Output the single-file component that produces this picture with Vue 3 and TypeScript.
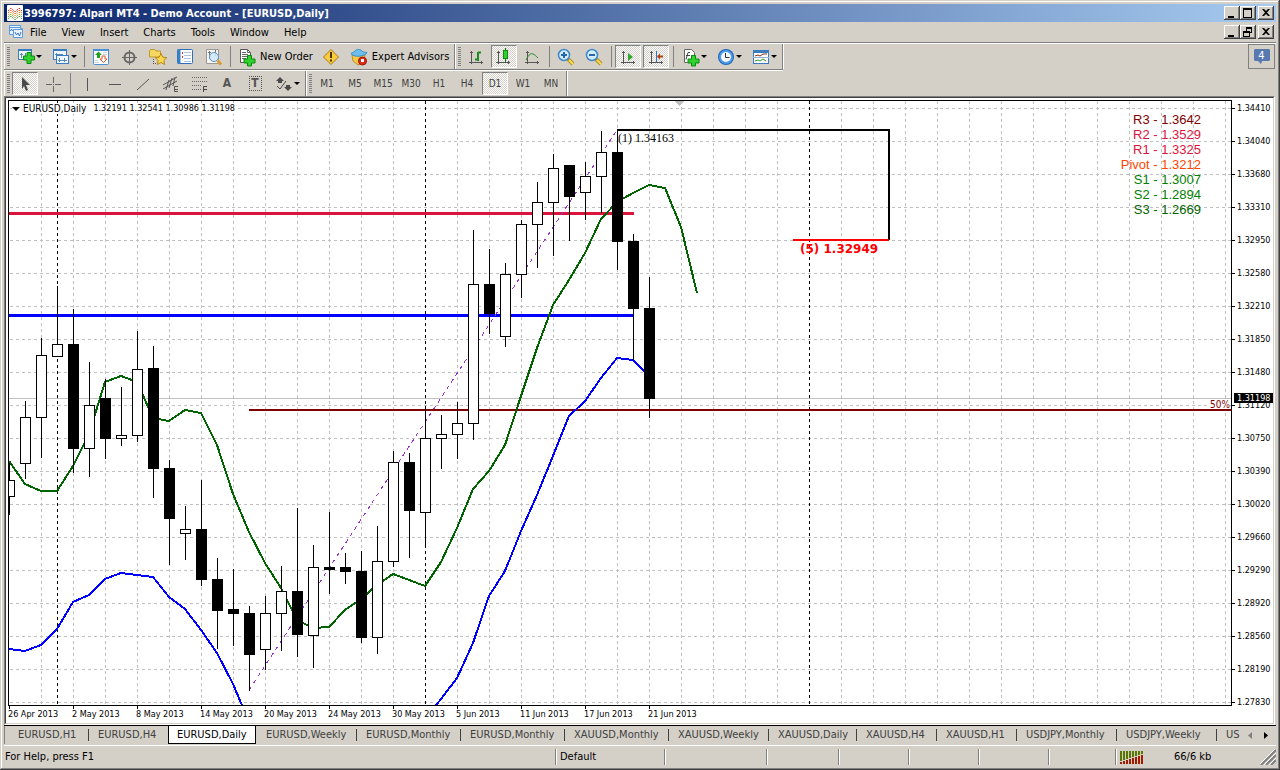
<script setup lang="ts">
import { ref } from 'vue'

interface Candle {
  x: number
  high: number
  top: number
  bottom: number
  low: number
  bear: boolean
}

const menus = ['File', 'View', 'Insert', 'Charts', 'Tools', 'Window', 'Help']
const periods = ['M1', 'M5', 'M15', 'M30', 'H1', 'H4', 'D1', 'W1', 'MN']
const period = ref('D1')

const tabs = [
  { label: 'EURUSD,H1', size: 's' },
  { label: 'EURUSD,H4', size: 's' },
  { label: 'EURUSD,Daily', size: 'm' },
  { label: 'EURUSD,Weekly', size: 'l' },
  { label: 'EURUSD,Monthly', size: 'xl' },
  { label: 'EURUSD,Monthly', size: 'xl' },
  { label: 'XAUUSD,Monthly', size: 'xl' },
  { label: 'XAUUSD,Weekly', size: 'l' },
  { label: 'XAUUSD,Daily', size: 'm' },
  { label: 'XAUUSD,H4', size: 's' },
  { label: 'XAUUSD,H1', size: 's' },
  { label: 'USDJPY,Monthly', size: 'l' },
  { label: 'USDJPY,Weekly', size: 'l' },
  { label: 'US', size: 'last' },
]
const activeTab = ref(2)

const prices = [
  '1.34410', '1.34040', '1.33680', '1.33310', '1.32950', '1.32580', '1.32210',
  '1.31850', '1.31480', '1.31120', '1.30750', '1.30390', '1.30020', '1.29660',
  '1.29290', '1.28920', '1.28560', '1.28190', '1.27830',
]
const dates = [
  '26 Apr 2013', '2 May 2013', '8 May 2013', '14 May 2013', '20 May 2013', '24 May 2013',
  '30 May 2013', '5 Jun 2013', '11 Jun 2013', '17 Jun 2013', '21 Jun 2013',
]
const pivots = [
  { text: 'R3 - 1.3642', tone: 'maroon' },
  { text: 'R2 - 1.3529', tone: 'crimson' },
  { text: 'R1 - 1.3325', tone: 'crimson' },
  { text: 'Pivot - 1.3212', tone: 'orange' },
  { text: 'S1 - 1.3007', tone: 'green' },
  { text: 'S2 - 1.2894', tone: 'green' },
  { text: 'S3 - 1.2669', tone: 'forest' },
]

const gridRows = Array.from({ length: 40 }, (_, i) => 7 + i * 33)
const gridCols = Array.from({ length: 80 }, (_, i) => 32 + i * 32)
const monthBreaks = [48, 416, 800]

// high, open/close top, open/close bottom, low, 1 for a falling bar
const bars: number[][] = [
  [463, 480, 496, 515, 0], [401, 417, 463, 479, 0], [338, 355, 417, 458, 0], [286, 344, 356, 356, 0],
  [309, 344, 448, 473, 1], [362, 405, 448, 477, 0], [379, 398, 438, 459, 1], [387, 435, 438, 446, 0],
  [331, 369, 435, 442, 0], [346, 368, 468, 498, 1], [460, 468, 518, 565, 1], [506, 529, 533, 560, 0],
  [480, 529, 579, 586, 1], [558, 579, 610, 649, 1], [569, 609, 613, 646, 1], [606, 613, 654, 691, 1],
  [596, 613, 649, 670, 0], [566, 591, 613, 651, 0], [508, 591, 634, 657, 1], [545, 567, 635, 668, 0],
  [512, 567, 569, 594, 1], [553, 567, 571, 584, 1], [551, 571, 637, 643, 1], [526, 561, 637, 654, 0],
  [451, 462, 561, 567, 0], [453, 462, 510, 558, 1], [406, 438, 512, 546, 0], [415, 434, 438, 469, 0],
  [402, 423, 434, 459, 0], [230, 284, 423, 440, 0], [249, 284, 313, 334, 1], [263, 274, 336, 347, 0],
  [220, 224, 274, 298, 0], [182, 202, 224, 268, 0], [154, 168, 202, 256, 0], [165, 165, 196, 241, 1],
  [162, 176, 192, 220, 0], [131, 152, 176, 213, 0], [130, 152, 241, 270, 1], [234, 241, 308, 360, 1],
  [277, 308, 398, 418, 1],
]
const candles: Candle[] = bars.map((b, i) => ({
  x: i * 16,
  high: b[0] - 101,
  top: b[1] - 101,
  bottom: b[2] - 101,
  low: b[3] - 101,
  bear: b[4] === 1,
}))

const line = (start: number, ys: number[]) =>
  ys.map((y, i) => `${(start + i) * 16},${y - 101}`).join(' ')

const greenLine = line(0, [
  461, 484, 491, 491, 466, 434, 382, 376, 382, 418, 421, 410, 413, 445, 494, 532, 563, 588, 620,
  628, 627, 610, 599, 585, 574, 580, 586, 562, 528, 489, 471, 445, 396, 348, 305, 280, 253, 219,
  202, 193, 185, 188, 227, 293,
])
const blueLeft = line(0, [
  649, 651, 645, 629, 602, 595, 579, 573, 575, 577, 597, 609, 630, 653, 684, 722,
])
const blueRight = line(26, [
  719, 699, 678, 643, 596, 571, 531, 495, 456, 416, 401, 378, 358, 360, 376,
])
</script>

<template>
  <div class="window">
    <header class="title-bar">
      <svg class="app-icon" width="16" height="16" viewBox="0 0 16 16" aria-hidden="true">
        <rect width="16" height="16" rx="1" fill="#fff" />
        <g fill="none" stroke-width="1" stroke-dasharray="2 1">
          <path d="M1 6l3-3 4 4 4-4 3 3" stroke="#d8322a" />
          <path d="M1 8l3-3 4 4 4-4 3 3" stroke="#e8682a" />
          <path d="M1 10l3-3 4 4 4-4 3 3" stroke="#e8a02a" />
          <path d="M1 12l3-3 4 4 4-4 3 3" stroke="#8cb83c" />
          <path d="M1 14l3-3 4 4 4-4 3 3" stroke="#4ca050" />
        </g>
      </svg>
      <h1>3996797: Alpari MT4 - Demo Account - [EURUSD,Daily]</h1>
      <div class="controls">
        <button type="button" aria-label="Minimize"><svg width="12" height="10"><rect x="2" y="8" width="6" height="2" /></svg></button>
        <button type="button" aria-label="Maximize"><svg width="12" height="10"><path d="M1 0h9v10h-9zM2 2v7h7v-7z" fill-rule="evenodd" /></svg></button>
        <button type="button" class="close" aria-label="Close"><svg width="12" height="10"><path d="M2 1h2l2 2 2-2h2L7 4.500l3 3.500H8L6 6 4 8H2l3-3.500z" /></svg></button>
      </div>
    </header>

    <nav class="menu-bar">
      <svg class="doc-icon" width="16" height="16" viewBox="0 0 16 16" aria-hidden="true">
        <path d="M1.500 1.500h11v3h2v9h-9v-3h-4z" fill="#eaf3fd" stroke="#5b9be0" />
        <path d="M5.500 10v-4.500h9M1 3.500h11" fill="none" stroke="#5b9be0" />
        <path d="M2.500 7l1-2 1 2M7 8l1.500 3 1.500-2 1.500 3 1.500-4" fill="none" stroke="#3b78c4" />
      </svg>
      <button v-for="m in menus" :key="m" type="button" class="menu-item">{{ m }}</button>
      <div class="controls">
        <button type="button" aria-label="Minimize chart"><svg width="12" height="10"><rect x="2" y="8" width="6" height="2" /></svg></button>
        <button type="button" aria-label="Restore chart"><svg width="12" height="10"><path d="M4 0h6v6H8v4H1V4h3zM5 2v2h3v1h1V2zM2 6v3h5V6z" fill-rule="evenodd" /></svg></button>
        <button type="button" class="close" aria-label="Close chart"><svg width="12" height="10"><path d="M2 1h2l2 2 2-2h2L7 4.500l3 3.500H8L6 6 4 8H2l3-3.500z" /></svg></button>
      </div>
    </nav>

    <div class="tool-area">
      <div class="toolbars">
        <div class="toolbar upper">
          <div class="group">
            <i class="grip"></i>
            <button type="button" class="tool drop" aria-label="New chart">
              <svg width="20" height="20" viewBox="0 0 20 20">
                <rect x="2.500" y="2.500" width="13" height="10" fill="#eef5fd" stroke="#3a7cc0" />
                <path d="M2 3h14" stroke="#3a7cc0" stroke-width="2" />
                <path d="M5.500 6v5M4 7.500h3M9.500 6v3M12.500 5v4" stroke="#5a88b8" fill="none" />
                <path d="M11 5.500h4V9h3.500v4H15v3.500h-4V13H7.500V9H11z" fill="#2fd02f" stroke="#0a8a0a" />
              </svg>
              <i class="arrow"></i>
            </button>
            <button type="button" class="tool drop" aria-label="Profiles">
              <svg width="20" height="20" viewBox="0 0 20 20">
                <rect x="2.500" y="2.500" width="13" height="10" fill="#eef5fd" stroke="#3a7cc0" />
                <path d="M2 3h14" stroke="#3a7cc0" stroke-width="2" />
                <path d="M4 7.500h8M5.500 6v3" stroke="#5a88b8" />
                <rect x="5.500" y="8.500" width="12" height="8" fill="#eef5fd" stroke="#3a7cc0" />
                <path d="M7 13.500h9M8.500 11v4M13.500 11v4" stroke="#5a88b8" />
              </svg>
              <i class="arrow"></i>
            </button>
            <i class="sep"></i>
            <button type="button" class="tool" aria-label="Market Watch">
              <svg width="20" height="20" viewBox="0 0 20 20">
                <rect x="2.500" y="2.500" width="15" height="15" rx="1" fill="#fff" stroke="#4a90d8" />
                <path d="M2 3h16" stroke="#4a90d8" stroke-width="2" />
                <path d="M7.500 4.500l3.500 3.500H9v3H6V8H4z" fill="#1fa01f" />
                <path d="M12.500 15.500L9 12h2V9h3v3h2z" fill="#fff" stroke="#e0592a" />
                <path d="M12 5.500h4M12 7.500h4M4 13.500h3M4 15.500h4" stroke="#c8d4e0" />
              </svg>
            </button>
            <button type="button" class="tool" aria-label="Data points">
              <svg width="20" height="20" viewBox="0 0 20 20" fill="none" stroke="#666">
                <circle cx="10.500" cy="10.500" r="5" stroke-width="2" />
                <path d="M10.500 3v15M3 10.500h15" />
              </svg>
            </button>
            <button type="button" class="tool" aria-label="Navigator">
              <svg width="20" height="20" viewBox="0 0 20 20">
                <path d="M2.500 4l1-1.500h4L9 4h4.500v6h-11z" fill="#f6d860" stroke="#c09828" />
                <path d="M6.500 12v6M8 16.500h3" stroke="#555" stroke-dasharray="1 1" />
                <path d="M14 6.500l1.800 3.700 4 .5-3 2.700.9 4.100-3.700-2-3.700 2 .9-4.100-3-2.700 4-.5z" fill="#fbd94c" stroke="#b88718" />
              </svg>
            </button>
            <button type="button" class="tool" aria-label="Terminal">
              <svg width="20" height="20" viewBox="0 0 20 20">
                <rect x="2.500" y="2.500" width="15" height="14" rx="1" fill="#fff" stroke="#2f6fb8" />
                <path d="M4 2.500v14" stroke="#3e80c8" stroke-width="3" />
                <path d="M7.500 5v2M7.500 9v2" stroke="#e03030" />
                <path d="M9 5.500h7M9 8.500h7M9 11.500h7M9 14.500h7" stroke="#a8c4e8" />
              </svg>
            </button>
            <button type="button" class="tool" aria-label="Strategy Tester">
              <svg width="20" height="20" viewBox="0 0 20 20">
                <path d="M3.500 2.500h12v14h-12z" fill="#f6f4ee" stroke="#999" />
                <path d="M5 5.500h3M6.500 4v8M12.500 3v6" stroke="#777" />
                <circle cx="11" cy="10" r="4.500" fill="#cfe6fa" fill-opacity=".85" stroke="#5a96d0" />
                <path d="M14.500 13.500l3.500 4" stroke="#d89c30" stroke-width="3" />
              </svg>
            </button>
            <i class="sep"></i>
            <button type="button" class="tool wide">
              <svg width="20" height="20" viewBox="0 0 20 20">
                <path d="M3.500 2.500h7l3 3v10h-10z" fill="#fff" stroke="#555" />
                <path d="M10.500 2.500v3h3M5 5.500h4M5 7.500h6M5 9.500h6M5 11.500h4" stroke="#666" fill="none" />
                <path d="M10.500 8.500h4V12H18v4h-3.500v3h-4v-3H7v-4h3.500z" fill="#2fd02f" stroke="#0a8a0a" />
              </svg>
              <span>New Order</span>
            </button>
            <button type="button" class="tool" aria-label="MetaEditor">
              <svg width="20" height="20" viewBox="0 0 20 20">
                <path d="M10 2.500l7.500 7.500-7.500 7.500L2.500 10z" fill="#f8cc3c" stroke="#a87818" stroke-linejoin="round" />
                <path d="M9 5h2v6H9zM9 12.500h2v2H9z" fill="#4a3408" />
              </svg>
            </button>
            <button type="button" class="tool wide">
              <svg width="20" height="20" viewBox="0 0 20 20">
                <path d="M3 8h13l-2 8-5 2-5-4z" fill="#f5c848" stroke="#c08c20" />
                <path d="M2 6.500c2-1.500 3-1 4-2.500 1-2 6-2 7 0 1 1.500 3 1 5 1.500-1 4-14 5.500-16 1z" fill="#6cc0f0" stroke="#3a8cc8" />
                <circle cx="13.500" cy="14" r="4" fill="#dc2c1c" stroke="#a01408" />
                <rect x="12" y="12" width="3" height="3" fill="#fff" />
              </svg>
              <span>Expert Advisors</span>
            </button>
          </div>
          <div class="group">
            <i class="grip"></i>
            <button type="button" class="tool" aria-label="Bar chart">
              <svg width="20" height="20" viewBox="0 0 20 20" fill="none" stroke="#555">
                <path d="M5.500 4v13M3 15.500h14M4 5.500h3M15.500 14v3" />
                <path d="M12 5v9M9 12.500h3M12 5.500h3" stroke="#1c8c1c" stroke-width="2" />
              </svg>
            </button>
            <button type="button" class="tool on" aria-label="Candlesticks">
              <svg width="20" height="20" viewBox="0 0 20 20" fill="none" stroke="#555">
                <path d="M4.500 4v13M2 15.500h14M3 5.500h3M14.500 14v3" />
                <path d="M11.500 1v14" stroke="#0c7c0c" />
                <rect x="9.500" y="3.500" width="4" height="8" fill="#2fd02f" stroke="#0c8c0c" />
              </svg>
            </button>
            <button type="button" class="tool" aria-label="Line chart">
              <svg width="20" height="20" viewBox="0 0 20 20" fill="none" stroke="#555">
                <path d="M5.500 4v13M3 15.500h14M4 5.500h3M15.500 14v3" />
                <path d="M4 13c3-6 5-7 7-6s3 2 5 4" stroke="#1c8c1c" />
              </svg>
            </button>
            <i class="sep"></i>
            <button type="button" class="tool" aria-label="Zoom in">
              <svg width="20" height="20" viewBox="0 0 20 20">
                <path d="M12 12l5 5" stroke="#b89020" stroke-width="4" />
                <path d="M13 13l4 4" stroke="#f6dc58" stroke-width="2" />
                <circle cx="8" cy="8" r="5.500" fill="#d4ecfc" stroke="#3c88cc" stroke-width="1.500" />
                <path d="M5 8h6M8 5v6" stroke="#2468a8" stroke-width="2" />
              </svg>
            </button>
            <button type="button" class="tool" aria-label="Zoom out">
              <svg width="20" height="20" viewBox="0 0 20 20">
                <path d="M12 12l5 5" stroke="#b89020" stroke-width="4" />
                <path d="M13 13l4 4" stroke="#f6dc58" stroke-width="2" />
                <circle cx="8" cy="8" r="5.500" fill="#d4ecfc" stroke="#3c88cc" stroke-width="1.500" />
                <path d="M5 8h6" stroke="#2468a8" stroke-width="2" />
              </svg>
            </button>
            <i class="sep"></i>
            <button type="button" class="tool on" aria-label="Auto scroll">
              <svg width="20" height="20" viewBox="0 0 20 20" fill="none" stroke="#555">
                <path d="M5.500 4v13M3 15.500h14M4 5.500h3M15.500 14v3" />
                <path d="M10 6l5 4-5 4z" fill="#2ca82c" stroke="none" />
              </svg>
            </button>
            <button type="button" class="tool on" aria-label="Chart shift">
              <svg width="20" height="20" viewBox="0 0 20 20" fill="none" stroke="#555">
                <path d="M5.500 4v13M3 15.500h14M4 5.500h3M15.500 14v3" />
                <path d="M10.500 4v11" stroke="#2c78c8" />
                <path d="M11 9.500l3-3v2h3v2h-3v2z" fill="#b83c10" stroke="none" />
              </svg>
            </button>
            <i class="sep"></i>
            <button type="button" class="tool drop" aria-label="Indicators">
              <svg width="20" height="20" viewBox="0 0 20 20">
                <path d="M3.500 2.500h7l3 3v10h-10z" fill="#fff" stroke="#666" />
                <path d="M5 12.500l2-7h2M5 8.500h4" stroke="#444" fill="none" />
                <path d="M10.500 8.500h4V12H18v4h-3.500v3h-4v-3H7v-4h3.500z" fill="#2fd02f" stroke="#0a8a0a" />
              </svg>
              <i class="arrow"></i>
            </button>
            <button type="button" class="tool drop" aria-label="Periods">
              <svg width="20" height="20" viewBox="0 0 20 20">
                <circle cx="10" cy="10" r="8" fill="#1c64b8" />
                <circle cx="10" cy="10" r="7" fill="#4c9ce8" />
                <circle cx="10" cy="10" r="5" fill="#f4f8fc" />
                <path d="M9.500 6v4.500h4" fill="none" stroke="#333" />
              </svg>
              <i class="arrow"></i>
            </button>
            <button type="button" class="tool drop" aria-label="Templates">
              <svg width="20" height="20" viewBox="0 0 20 20">
                <rect x="2.500" y="3.500" width="15" height="13" fill="#fff" stroke="#3a7cc0" />
                <path d="M2 4.500h16" stroke="#3a7cc0" stroke-width="3" />
                <path d="M2 10.500h16" stroke="#8cb4e0" />
                <path d="M4 9l3-1 2 1 3-2 4 0" stroke="#8c2c18" fill="none" />
                <path d="M4 14l3-1 2 1 3-2 3 2" stroke="#2c9c2c" fill="none" />
              </svg>
              <i class="arrow"></i>
            </button>
          </div>
        </div>

        <div class="toolbar">
          <div class="group">
            <i class="grip"></i>
            <button type="button" class="tool on" aria-label="Cursor">
              <svg width="20" height="20" viewBox="0 0 20 20"><path d="M7 3l8 8h-4l2 5-2 1-2-5-2 3z" fill="#4a4a4a" /></svg>
            </button>
            <button type="button" class="tool" aria-label="Crosshair">
              <svg width="20" height="20" viewBox="0 0 20 20" stroke="#666"><path d="M10.500 3v6M10.500 12v6M3 10.500h6M12 10.500h6M10 10.500h1" /></svg>
            </button>
            <i class="sep"></i>
            <button type="button" class="tool" aria-label="Vertical line">
              <svg width="20" height="20" viewBox="0 0 20 20" stroke="#555"><path d="M10.500 4v13" /></svg>
            </button>
            <button type="button" class="tool" aria-label="Horizontal line">
              <svg width="20" height="20" viewBox="0 0 20 20" stroke="#555"><path d="M4 10.500h12" /></svg>
            </button>
            <button type="button" class="tool" aria-label="Trendline">
              <svg width="20" height="20" viewBox="0 0 20 20" stroke="#555"><path d="M4 16L16 5" /></svg>
            </button>
            <button type="button" class="tool" aria-label="Equidistant channel">
              <svg width="20" height="20" viewBox="0 0 20 20" fill="none" stroke="#555">
                <path d="M2 11l14-8M2 15l14-8M5 16l3-10M8 14l3-10M12 12l2-9" />
                <path d="M17 12.500h-3.500v5H17M14 15.500h3" />
              </svg>
            </button>
            <button type="button" class="tool" aria-label="Fibonacci retracement">
              <svg width="20" height="20" viewBox="0 0 20 20" fill="none" stroke="#666">
                <path d="M3 3.500h15M3 7.500h15M3 11.500h10M3 15.500h9" stroke-dasharray="1 1" />
                <path d="M18 12.500h-3.500v5.500M15 15.500h3" stroke="#444" />
              </svg>
            </button>
            <button type="button" class="tool letter" aria-label="Text">A</button>
            <button type="button" class="tool letter boxed" aria-label="Text label"><span>T</span></button>
            <button type="button" class="tool drop" aria-label="Arrows">
              <svg width="20" height="20" viewBox="0 0 20 20" fill="#4a4a4a">
                <path d="M6 3l4 4H8v2H4V7H2zM14 17l-4-4h2v-2h4v2h2z" />
                <path d="M3 12l3 3 6-8" fill="none" stroke="#4a4a4a" />
              </svg>
              <i class="arrow"></i>
            </button>
          </div>
          <div class="group">
            <i class="grip"></i>
            <button
              v-for="p in periods"
              :key="p"
              type="button"
              class="tool period"
              :class="{ on: p === period }"
              @click="period = p"
            >{{ p }}</button>
          </div>
        </div>
      </div>
      <button type="button" class="badge" aria-label="Messages">
        <svg width="18" height="18" viewBox="0 0 18 18"><path d="M2 1h14l1 1v10l-1 1H9l-1 3-3-3H2l-1-1V2z" fill="#5878b0" /></svg>
        <span>4</span>
      </button>
    </div>

    <main class="mdi">
      <div class="sheet">
        <section class="plot">
          <svg class="canvas" width="100%" height="100%" shape-rendering="crispEdges">
            <g stroke="#c0c0c0" stroke-dasharray="3 3">
              <line v-for="y in gridRows" :key="'r' + y" x1="1" x2="100%" :y1="y + 0.5" :y2="y + 0.5" />
              <line v-for="x in gridCols" :key="'c' + x" y1="0" y2="100%" :x1="x + 0.5" :x2="x + 0.5" />
            </g>
            <g stroke="#000" stroke-dasharray="3 3">
              <line v-for="x in monthBreaks" :key="x" y1="0" y2="100%" :x1="x + 0.5" :x2="x + 0.5" />
            </g>
            <rect y="297" width="100%" height="1" fill="#c0c0c0" />
            <rect y="111" width="625" height="3" fill="#dc143c" />
            <rect y="213" width="625" height="3" fill="#0000ff" />
            <rect x="240" y="308" width="100%" height="2" fill="#800000" />
            <g fill="none" stroke-width="2">
              <polyline :points="greenLine" stroke="#006400" />
              <polyline :points="blueLeft" stroke="#0000ff" />
              <polyline :points="blueRight" stroke="#0000ff" />
            </g>
            <line x1="240" y1="589" x2="608" y2="29" stroke="#9932cc" stroke-dasharray="4 4" />
            <g v-for="c in candles" :key="c.x">
              <rect :x="c.x" :y="c.high" width="1" :height="c.low - c.high" />
              <rect :x="c.x - 5" :y="c.top" width="11" :height="c.bottom - c.top + 1" />
              <rect
                v-if="!c.bear"
                :x="c.x - 4"
                :y="c.top + 1"
                width="9"
                :height="c.bottom - c.top - 1"
                fill="#fff"
              />
            </g>
            <path d="M608 29h272v110" fill="none" stroke="#000" stroke-width="2" />
            <path d="M784 139h96" stroke="#ff0000" stroke-width="2" />
            <path d="M666 0h9l-4.500 5z" fill="#c0c0c0" />
            <text x="609" y="41" class="wave-start">(1) 1.34163</text>
            <text x="791" y="152" class="wave-end">(5) 1.32949</text>
          </svg>
          <div class="quote">
            <i class="arrow"></i>
            <strong>EURUSD,Daily</strong>
            <span>1.32191 1.32541 1.30986 1.31198</span>
          </div>
          <ul class="pivots">
            <li v-for="p in pivots" :key="p.text" :class="p.tone">{{ p.text }}</li>
          </ul>
          <span class="retrace">50%</span>
        </section>
        <div class="price-axis">
          <div v-for="p in prices" :key="p" class="price">{{ p }}</div>
          <span class="bid">1.31198</span>
        </div>
        <div class="time-axis">
          <div v-for="d in dates" :key="d" class="date">{{ d }}</div>
        </div>
      </div>
    </main>

    <div class="tab-bar">
      <div class="tabs">
        <button
          v-for="(t, i) in tabs"
          :key="i"
          type="button"
          class="tab"
          :class="[t.size, { active: i === activeTab, plain: i === activeTab - 1 }]"
          @click="activeTab = i"
        >{{ t.label }}</button>
      </div>
      <button type="button" class="scroll off" aria-label="Scroll tabs left"><svg width="4" height="7"><path d="M4 0v7L0 3.500z" /></svg></button>
      <button type="button" class="scroll" aria-label="Scroll tabs right"><svg width="4" height="7"><path d="M0 0v7l4-3.500z" /></svg></button>
    </div>

    <footer class="status">
      <span class="cell help">For Help, press F1</span>
      <span class="cell profile">Default</span>
      <span class="cell long"></span>
      <span class="cell mid"></span>
      <span class="cell"></span>
      <span class="cell"></span>
      <span class="cell"></span>
      <span class="cell short"></span>
      <span class="cell link">
        <svg width="24" height="13" shape-rendering="crispEdges" aria-hidden="true">
          <g v-for="n in 8" :key="n">
            <rect :x="(n - 1) * 3" y="0" width="2" :height="11 - n" fill="#5a7800" />
            <rect :x="(n - 1) * 3" :y="12 - n" width="2" :height="n + 1" fill="#a01c00" />
          </g>
        </svg>
        <span>66/6 kb</span>
      </span>
      <svg class="sizer" width="16" height="16" viewBox="0 0 16 16" aria-hidden="true">
        <path d="M1 16L16 1M6 16L16 6M11 16l5-5" stroke="#808080" stroke-width="2" />
        <path d="M-1 16L16-1M4 16L16 4M9 16l7-7" stroke="#fff" />
      </svg>
    </footer>
  </div>
</template>

<style>
body {
  margin: 0;
}
</style>

<style scoped>
.window {
  box-sizing: border-box;
  display: flex;
  flex-direction: column;
  min-height: 100vh;
  padding: 4px 4px 2px;
  overflow: hidden;
  background: #d4d0c8;
  box-shadow: inset -1px -1px #404040, inset 1px 1px #d4d0c8, inset -2px -2px #808080, inset 2px 2px #fff;
  color: #000;
  font-family: 'DejaVu Sans Condensed', 'DejaVu Sans', sans-serif;
  font-size: 11px;
  line-height: 13px;
}
button {
  margin: 0;
  padding: 0;
  border: 0;
  background: none;
  color: inherit;
  font: inherit;
}
svg {
  display: block;
  flex: none;
}
.title-bar {
  display: flex;
  align-items: center;
  height: 18px;
  padding: 0 2px 0 3px;
  background: linear-gradient(90deg, #0a246a, #a6caf0);
  color: #fff;
}
h1 {
  margin: 0 0 0 1px;
  font-size: 11px;
  line-height: 13px;
  font-weight: bold;
  white-space: nowrap;
}
.controls {
  display: flex;
  margin-left: auto;
}
.controls button {
  box-sizing: border-box;
  width: 16px;
  height: 14px;
  padding: 2px;
  background: #d4d0c8;
  box-shadow: inset -1px -1px #404040, inset 1px 1px #fff, inset -2px -2px #808080;
}
.controls .close {
  margin-left: 2px;
}
.menu-bar {
  display: flex;
  align-items: center;
  height: 20px;
  padding: 0 2px 0 4px;
  border-bottom: 1px solid #808080;
}
.doc-icon {
  margin-right: 6px;
}
.menu-item {
  margin-right: 15px;
}
.tool-area {
  display: flex;
  justify-content: space-between;
  align-items: flex-start;
  border-top: 1px solid #fff;
}
.toolbar {
  display: flex;
  height: 25px;
}
.upper {
  border-bottom: 1px solid #808080;
  box-shadow: 0 1px #fff;
  margin-bottom: 1px;
}
.group {
  display: flex;
  align-items: center;
  padding: 0 1px 0 2px;
  border-left: 1px solid #fff;
  border-right: 1px solid #808080;
}
.group:last-child {
  box-shadow: 1px 0 #fff;
}
.grip {
  width: 3px;
  height: 19px;
  margin-right: 1px;
  background: repeating-linear-gradient(#808080 0 1px, #d4d0c8 1px 2px);
}
.tool {
  box-sizing: border-box;
  display: flex;
  align-items: center;
  justify-content: center;
  width: 28px;
  height: 23px;
  border: 1px solid transparent;
  border-width: 0 1px;
  white-space: nowrap;
}
.tool.drop {
  width: 35px;
}
.tool.wide {
  width: auto;
  gap: 3px;
  padding: 0 3px;
}
.tool.on {
  width: 26px;
  margin: 0 1px;
  border: 1px solid #808080;
  border-right-color: #fff;
  border-bottom-color: #fff;
  background: repeating-conic-gradient(#fff 0 25%, #d4d0c8 0 50%) 0 0 / 2px 2px;
}
.tool.period {
  color: #404040;
  font-size: 10px;
}
.tool.letter {
  color: #555;
  font-size: 12px;
  font-weight: bold;
}
.boxed span {
  width: 11px;
  border: 1px dotted #555;
}
.sep {
  width: 1px;
  height: 21px;
  margin: 0 2px 0 3px;
  background: #808080;
}
.arrow {
  width: 0;
  height: 0;
  border: solid transparent;
  border-width: 3px 3px 0;
  border-top-color: #000;
}
.badge {
  box-sizing: border-box;
  display: grid;
  place-items: center;
  width: 27px;
  height: 25px;
  margin-right: 1px;
  border: 1px solid #808080;
}
.badge > * {
  grid-area: 1 / 1;
}
.badge span {
  padding-bottom: 3px;
  color: #fff;
}
.mdi {
  display: flex;
  flex: 1;
  flex-direction: column;
  margin-right: 1px;
  border: solid #808080;
  border-width: 1px 0 0 1px;
  border-right: 1px solid #fff;
  border-bottom: 1px solid #fff;
  background: #fff;
}
.sheet {
  display: grid;
  flex: 1;
  grid-template: minmax(0, 1fr) 17px / minmax(0, 1fr) 41px;
  padding: 2px 0 0 2px;
  border: 1px solid #404040;
  border-right-color: #d4d0c8;
  border-bottom-color: #d4d0c8;
  overflow: hidden;
  font-size: 9px;
  line-height: 11px;
}
.plot {
  position: relative;
  border: 1px solid #000;
  overflow: hidden;
}
.canvas {
  position: absolute;
  inset: 0;
}
.wave-start {
  font-family: 'Liberation Serif', serif;
  font-size: 12px;
}
.wave-end {
  fill: #ff0000;
  font-family: 'DejaVu Sans', sans-serif;
  font-size: 12px;
  font-weight: bold;
}
.quote {
  position: absolute;
  top: 2px;
  left: 3px;
  display: flex;
  align-items: center;
  background: #fff;
}
.quote .arrow {
  border-width: 4px 4px 0;
}
.quote strong {
  margin: 0 7px 0 3px;
  font-size: 10px;
  font-weight: normal;
}
.pivots {
  position: absolute;
  top: 11px;
  right: 30px;
  margin: 0;
  padding: 0;
  list-style: none;
  font-family: 'Liberation Sans', sans-serif;
  font-size: 13px;
  line-height: 15px;
  text-align: right;
}
.maroon {
  color: #800000;
}
.crimson {
  color: #dc143c;
}
.orange {
  color: #ff4500;
}
.green {
  color: #008000;
}
.forest {
  color: #006400;
}
.retrace {
  position: absolute;
  top: 298px;
  right: 1px;
  height: 10px;
  background: #fff;
  color: #800000;
  font-size: 10px;
}
.price-axis {
  position: relative;
  grid-row: 1 / 3;
  grid-column: 2;
  margin-top: -8px;
}
.price {
  display: flex;
  align-items: center;
  gap: 2px;
  height: 33px;
}
.price::before {
  width: 3px;
  height: 1px;
  background: #000;
  content: '';
}
.bid {
  position: absolute;
  top: 301px;
  left: 2px;
  right: 0;
  padding-left: 3px;
  background: #000;
  color: #fff;
  line-height: 10px;
}
.time-axis {
  display: flex;
}
.date {
  flex: none;
  width: 64px;
  white-space: nowrap;
}
.date::before {
  display: block;
  width: 1px;
  height: 3px;
  margin-left: 1px;
  background: #000;
  content: '';
}
.tab-bar {
  display: flex;
  height: 19px;
  padding-right: 2px;
  border-top: 1px solid #000;
  border-bottom: 1px solid #fff;
  color: #404040;
}
.tabs {
  display: flex;
  flex: 1;
  min-width: 0;
  height: 18px;
  padding-left: 3px;
  border-left: 1px solid #808080;
  overflow: hidden;
}
.tab {
  position: relative;
  flex: none;
  box-sizing: border-box;
  padding: 0 0 2px 10px;
  text-align: left;
  white-space: nowrap;
}
.tab::after {
  position: absolute;
  top: 3px;
  right: -1px;
  width: 1px;
  height: 12px;
  background: #404040;
  content: '';
}
.tab.s {
  width: 80px;
}
.tab.m {
  width: 88px;
}
.tab.l {
  width: 100px;
}
.tab.xl {
  width: 104px;
}
.tab.active {
  padding: 0 0 1px 8px;
  border: solid #000;
  border-width: 0 1px 1px;
  background: #fff;
  color: #000;
}
.tab.active::after,
.tab.plain::after,
.tab.last::after {
  display: none;
}
.scroll {
  width: 16px;
  padding: 0 6px;
}
.scroll.off {
  fill: #808080;
}
.status {
  display: flex;
  align-items: center;
  height: 22px;
}
.cell {
  box-sizing: border-box;
  flex: 0 1 70px;
  height: 16px;
  padding-left: 4px;
  border-left: 1px solid #808080;
  box-shadow: inset 1px 0 #fff;
  line-height: 16px;
}
.help {
  flex: 1 1 0;
  padding-left: 1px;
  border: 0;
  box-shadow: none;
}
.profile {
  flex-basis: 109px;
}
.long {
  flex-basis: 102px;
}
.mid {
  flex-basis: 72px;
}
.short {
  flex-basis: 67px;
}
.link {
  display: flex;
  align-items: center;
  flex-basis: 145px;
}
.link span {
  margin-left: 30px;
}
</style>
